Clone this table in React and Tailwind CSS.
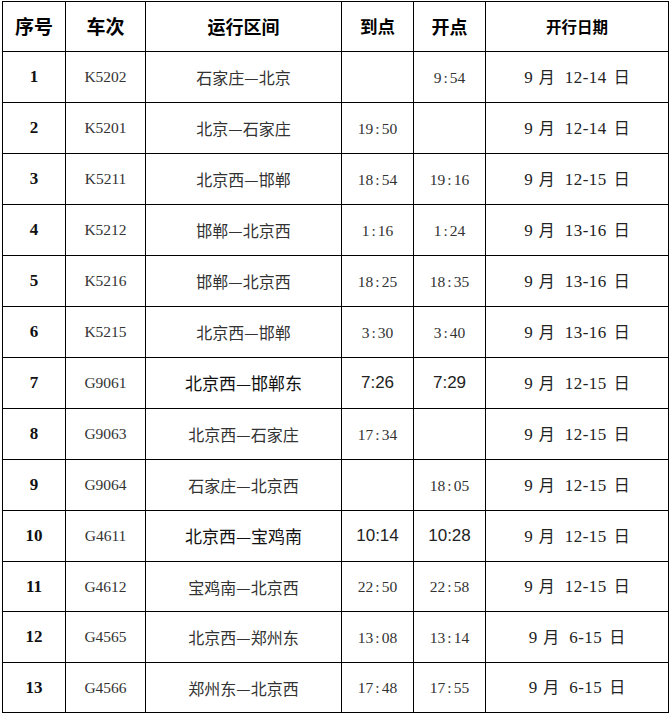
const rows = [
  { no: 1, train: 'K5202', route: '石家庄—北京', arr: '', dep: '9:54', date: ['9', '12-14'] },
  { no: 2, train: 'K5201', route: '北京—石家庄', arr: '19:50', dep: '', date: ['9', '12-14'] },
  { no: 3, train: 'K5211', route: '北京西—邯郸', arr: '18:54', dep: '19:16', date: ['9', '12-15'] },
  { no: 4, train: 'K5212', route: '邯郸—北京西', arr: '1:16', dep: '1:24', date: ['9', '13-16'] },
  { no: 5, train: 'K5216', route: '邯郸—北京西', arr: '18:25', dep: '18:35', date: ['9', '13-16'] },
  { no: 6, train: 'K5215', route: '北京西—邯郸', arr: '3:30', dep: '3:40', date: ['9', '13-16'] },
  { no: 7, train: 'G9061', route: '北京西—邯郸东', arr: '7:26', dep: '7:29', date: ['9', '12-15'], alt: true },
  { no: 8, train: 'G9063', route: '北京西—石家庄', arr: '17:34', dep: '', date: ['9', '12-15'] },
  { no: 9, train: 'G9064', route: '石家庄—北京西', arr: '', dep: '18:05', date: ['9', '12-15'] },
  { no: 10, train: 'G4611', route: '北京西—宝鸡南', arr: '10:14', dep: '10:28', date: ['9', '12-15'], alt: true },
  { no: 11, train: 'G4612', route: '宝鸡南—北京西', arr: '22:50', dep: '22:58', date: ['9', '12-15'], h: 'h-[50px]' },
  { no: 12, train: 'G4565', route: '北京西—郑州东', arr: '13:08', dep: '13:14', date: ['9', '6-15'] },
  { no: 13, train: 'G4566', route: '郑州东—北京西', arr: '17:48', dep: '17:55', date: ['9', '6-15'], h: 'h-[50px]' },
];

const serif = "font-['Liberation_Serif','Noto_Sans_CJK_SC',serif]";
const cjk = "font-['Noto_Sans_CJK_SC',sans-serif]";

// SimSun-style times: the colon sits in a half-width slot
function Clock({ value }) {
  const [h, m] = value.split(':');
  return (
    <span className={`${serif} text-[15.5px] text-[#333]`}>
      {h}
      <span className="mx-[2px]">:</span>
      {m}
    </span>
  );
}

function TimeCell({ value, alt }) {
  return (
    <td className="border border-black text-center align-middle p-0">
      {!value ? null : alt ? (
        <span className="font-['Liberation_Sans',sans-serif] text-[17px] text-[#222]">{value}</span>
      ) : (
        <Clock value={value} />
      )}
    </td>
  );
}

export default function App() {
  return (
    <div className="bg-white w-[670px] h-[715px] pt-[1px]">
      <table className="ml-[2px] w-[666px] table-fixed border-collapse border border-black">
        <colgroup>
          <col className="w-[63px]" />
          <col className="w-[80px]" />
          <col className="w-[196px]" />
          <col className="w-[72px]" />
          <col className="w-[72px]" />
          <col className="w-[183px]" />
        </colgroup>
        <thead>
          <tr className={`h-[50px] ${cjk} font-bold text-black`}>
            <th className="border border-black text-[19px] font-bold p-0">序号</th>
            <th className="border border-black text-[19px] font-bold p-0">车次</th>
            <th className="border border-black text-[18px] font-bold p-0">运行区间</th>
            <th className="border border-black text-[17.5px] font-bold p-0">到点</th>
            <th className="border border-black text-[18px] font-bold p-0">开点</th>
            <th className="border border-black text-[15.5px] font-bold p-0">开行日期</th>
          </tr>
        </thead>
        <tbody>
          {rows.map((r) => (
            <tr key={r.no} className={r.h || 'h-[51px]'}>
              <td className="border border-black text-center p-0 font-['Liberation_Serif',serif] font-bold text-[17px] text-[#111]">
                {r.no}
              </td>
              <td className={`border border-black text-center p-0 ${serif} text-[15.5px] text-[#333]`}>
                {r.train}
              </td>
              <td className={`border border-black text-center p-0 ${cjk} ${r.alt ? 'text-[17px] text-[#111]' : 'text-[16px] text-[#333]'}`}>
                {r.route}
              </td>
              <TimeCell value={r.arr} alt={r.alt} />
              <TimeCell value={r.dep} alt={r.alt} />
              <td className={`border border-black text-center p-0 ${serif} text-[17px] text-[#222]`}>
                {r.date[0]}
                <span className={`${cjk} text-[16px] ml-[6px] mr-[10px]`}>月</span>
                <span className="tracking-[0.5px]">{r.date[1]}</span>
                <span className={`${cjk} text-[16px] ml-[7px]`}>日</span>
              </td>
            </tr>
          ))}
        </tbody>
      </table>
    </div>
  );
}
